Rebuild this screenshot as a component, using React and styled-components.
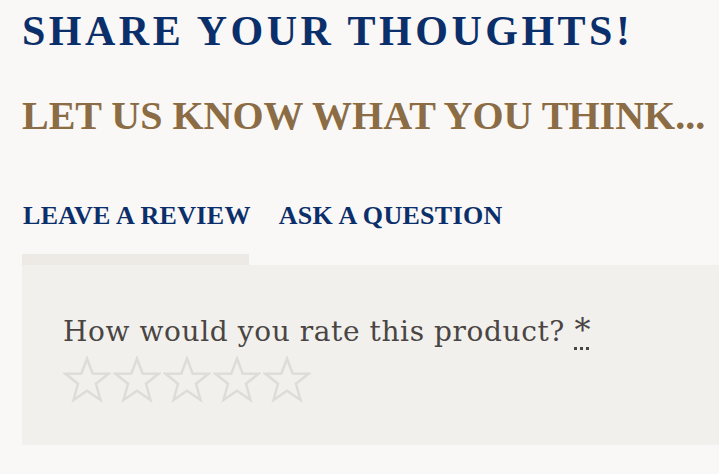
import styled, { createGlobalStyle } from "styled-components";

const GlobalStyle = createGlobalStyle`
  body {
    margin: 0;
    background: #f9f8f6;
    font-family: "Liberation Serif", "DejaVu Serif", serif;
  }
`;

const Page = styled.div`
  padding: 6px 0 30px 22px;
  overflow: hidden;
`;

const Title = styled.h2`
  margin: 0;
  color: #0b2f6b;
  font-size: 42px;
  font-weight: 700;
  letter-spacing: 3.5px;
  line-height: 50px;
  white-space: nowrap;
`;

const Subtitle = styled.h3`
  margin: 37px 0 0;
  color: #8b6c45;
  font-size: 40px;
  font-weight: 700;
  line-height: 46px;
  white-space: nowrap;
`;

const Tabs = styled.div`
  display: flex;
  gap: 26px;
  margin-top: 62px;
`;

const Tab = styled.div`
  color: #0b2f6b;
  font-size: 26px;
  font-weight: 700;
  line-height: 30px;
  padding: 0 1px;
  letter-spacing: 0.3px;
`;

const TabMarker = styled.div`
  width: 227px;
  height: 11px;
  margin-top: 23px;
  background: #edeae6;
`;

const Panel = styled.div`
  background: #f1f0ed;
  padding: 47px 40px 42px 41px;
`;

const Question = styled.p`
  margin: 0;
  color: #4a4543;
  font-family: "DejaVu Serif", serif;
  font-size: 28px;
  letter-spacing: 0.6px;
  line-height: 36px;
`;

const Required = styled.abbr`
  font-size: 32px;
  text-decoration: underline dotted;
  text-underline-offset: 6px;
  text-decoration-thickness: 3px;
`;

const Stars = styled.div`
  display: flex;
  gap: 2px;
  margin-top: 6px;
`;

const Star = () => (
  <svg width="48" height="47" viewBox="0 0 48 47" fill="none">
    <path
      d="M24 2.5 L29.6 17.4 L45.5 17.8 L33 27.8 L37.5 44 L24 34.8 L10.5 44 L15 27.8 L2.5 17.8 L18.4 17.4 Z"
      stroke="#dddcda"
      strokeWidth="2.5"
      strokeLinejoin="miter"
    />
  </svg>
);

export default function App() {
  return (
    <>
      <GlobalStyle />
      <Page>
        <Title>SHARE YOUR THOUGHTS!</Title>
        <Subtitle>LET US KNOW WHAT YOU THINK...</Subtitle>
        <Tabs>
          <Tab>LEAVE A REVIEW</Tab>
          <Tab>ASK A QUESTION</Tab>
        </Tabs>
        <TabMarker />
        <Panel>
          <Question>
            How would you rate this product? <Required title="required">*</Required>
          </Question>
          <Stars>
            {[1, 2, 3, 4, 5].map((n) => (
              <Star key={n} />
            ))}
          </Stars>
        </Panel>
      </Page>
    </>
  );
}
